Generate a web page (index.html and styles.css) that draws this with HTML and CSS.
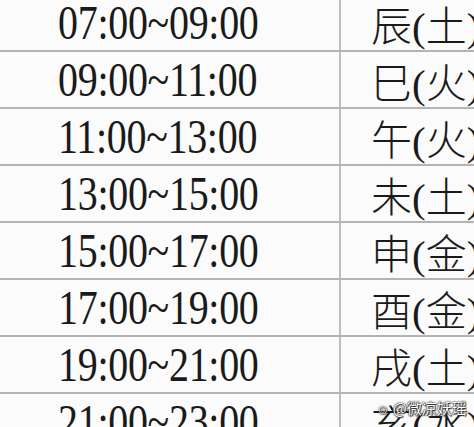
FILE: index.html
```html
<!DOCTYPE html>
<html>
<head>
<meta charset="utf-8">
<link rel="stylesheet" href="styles.css">
</head>
<body>
<div class="sheet">
  <div class="row"><div class="time"><span>07:00~09:00</span></div><div class="branch">辰(土)</div></div>
  <div class="row"><div class="time"><span>09:00~11:00</span></div><div class="branch">巳(火)</div></div>
  <div class="row"><div class="time"><span>11:00~13:00</span></div><div class="branch">午(火)</div></div>
  <div class="row"><div class="time"><span>13:00~15:00</span></div><div class="branch">未(土)</div></div>
  <div class="row"><div class="time"><span>15:00~17:00</span></div><div class="branch">申(金)</div></div>
  <div class="row"><div class="time"><span>17:00~19:00</span></div><div class="branch">酉(金)</div></div>
  <div class="row"><div class="time"><span>19:00~21:00</span></div><div class="branch">戌(土)</div></div>
  <div class="row"><div class="time"><span>21:00~23:00</span></div><div class="branch">亥(水)</div></div>
</div>
<div class="watermark"><span class="wm-icon">☺</span> @微凉妖瑶</div>
</body>
</html>
```

FILE: styles.css
```css
html, body {
  margin: 0;
  padding: 0;
  background: #fbfbfb;
  width: 474px;
  height: 427px;
  overflow: hidden;
  position: relative;
}
.sheet {
  margin-top: -5px;
  display: flex;
  flex-direction: column;
}
.row {
  display: flex;
  height: 57px;
  box-sizing: border-box;
  border-bottom: 2px solid #b4b4b4;
  flex-shrink: 0;
}
.time {
  width: 341px;
  box-sizing: border-box;
  border-right: 2px solid #bdbdbd;
  padding-left: 58px;
  display: flex;
  align-items: center;
  font-family: "Liberation Serif", serif;
  font-size: 40px;
  color: #1a1a1a;
}
.time span {
  display: inline-block;
  transform: scaleY(1.2);
  letter-spacing: -0.3px;
}
.branch {
  flex: 1;
  padding-left: 30px;
  display: flex;
  align-items: center;
  white-space: nowrap;
  overflow: hidden;
  font-family: "Liberation Serif", "Noto Sans CJK SC", serif;
  font-size: 41px;
  font-weight: 300;
  color: #1a1a1a;
}
.watermark {
  position: absolute;
  left: 376px;
  top: 399px;
  font-family: "Noto Sans CJK SC", sans-serif;
  font-size: 15px;
  line-height: 18px;
  color: #fff;
  text-shadow: 0 0 1px #000, 0 0 2px #222, 1px 1px 1px #333;
  white-space: nowrap;
}
.wm-icon {
  font-size: 13px;
}
```
